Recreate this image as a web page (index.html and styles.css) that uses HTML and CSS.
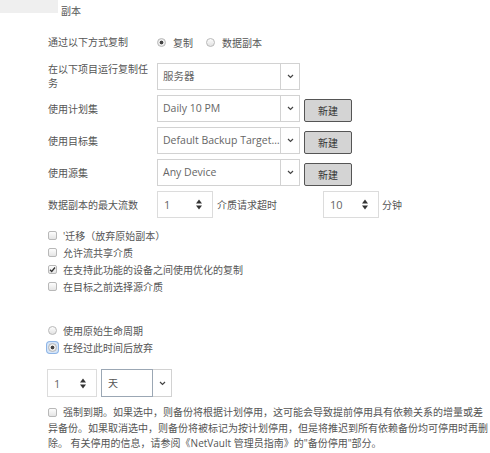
FILE: index.html
```html
<!DOCTYPE html>
<html lang="zh-CN">
<head>
    <meta charset="UTF-8">
    <meta name="viewport" content="width=device-width, initial-scale=1.0">
    <title>副本</title>
    <link rel="stylesheet" href="styles.css">
</head>
<body>
    <div class="page-head">
        <span class="crumb"></span>
        <span class="page-title">副本</span>
    </div>

    <form class="copy-form">
        <div class="form-row method-row">
            <span class="field-label">通过以下方式复制</span>
            <label class="choice"><span class="radio checked"></span>复制</label>
            <label class="choice"><span class="radio"></span>数据副本</label>
        </div>

        <div class="form-row field-row">
            <span class="field-label">在以下项目运行复制任务</span>
            <div class="select">
                <span class="select-value">服务器</span>
                <span class="select-arrow"><svg width="7" height="5" viewBox="0 0 7 5"><path d="M1 1l2.5 2.5L6 1" fill="none" stroke="#444" stroke-width="1.2"/></svg></span>
            </div>
        </div>

        <div class="form-row field-row">
            <span class="field-label">使用计划集</span>
            <div class="select">
                <span class="select-value">Daily 10 PM</span>
                <span class="select-arrow"><svg width="7" height="5" viewBox="0 0 7 5"><path d="M1 1l2.5 2.5L6 1" fill="none" stroke="#444" stroke-width="1.2"/></svg></span>
            </div>
            <button type="button" class="new-button">新建</button>
        </div>

        <div class="form-row field-row">
            <span class="field-label">使用目标集</span>
            <div class="select">
                <span class="select-value">Default Backup Target ...</span>
                <span class="select-arrow"><svg width="7" height="5" viewBox="0 0 7 5"><path d="M1 1l2.5 2.5L6 1" fill="none" stroke="#444" stroke-width="1.2"/></svg></span>
            </div>
            <button type="button" class="new-button">新建</button>
        </div>

        <div class="form-row field-row">
            <span class="field-label">使用源集</span>
            <div class="select">
                <span class="select-value">Any Device</span>
                <span class="select-arrow"><svg width="7" height="5" viewBox="0 0 7 5"><path d="M1 1l2.5 2.5L6 1" fill="none" stroke="#444" stroke-width="1.2"/></svg></span>
            </div>
            <button type="button" class="new-button">新建</button>
        </div>

        <div class="form-row field-row">
            <span class="field-label">数据副本的最大流数</span>
            <div class="spinner">
                <span>1</span>
                <svg width="6" height="11" viewBox="0 0 6 11"><path d="M0 4.5L3 0.5L6 4.5Z M0 6.5L3 10.5L6 6.5Z" fill="#333"/></svg>
            </div>
            <span class="inline-label">介质请求超时</span>
            <div class="spinner">
                <span>10</span>
                <svg width="6" height="11" viewBox="0 0 6 11"><path d="M0 4.5L3 0.5L6 4.5Z M0 6.5L3 10.5L6 6.5Z" fill="#333"/></svg>
            </div>
            <span class="unit">分钟</span>
        </div>

        <div class="check-list">
            <label class="check-item"><span class="box"></span>'迁移（放弃原始副本）</label>
            <label class="check-item"><span class="box"></span>允许流共享介质</label>
            <label class="check-item"><span class="box checked"><svg width="7" height="7" viewBox="0 0 7 7"><path d="M1 3.8l1.7 1.7L6 1.5" fill="none" stroke="#333" stroke-width="1.3"/></svg></span>在支持此功能的设备之间使用优化的复制</label>
            <label class="check-item"><span class="box"></span>在目标之前选择源介质</label>
        </div>

        <div class="radio-list">
            <label class="check-item"><span class="radio"></span>使用原始生命周期</label>
            <label class="check-item"><span class="focus-ring"><span class="radio checked"></span></span>在经过此时间后放弃</label>
        </div>

        <div class="form-row retention-row">
            <div class="spinner small">
                <span>1</span>
                <svg width="6" height="11" viewBox="0 0 6 11"><path d="M0 4.5L3 0.5L6 4.5Z M0 6.5L3 10.5L6 6.5Z" fill="#333"/></svg>
            </div>
            <div class="select day">
                <span class="select-value">天</span>
                <span class="select-arrow"><svg width="7" height="5" viewBox="0 0 7 5"><path d="M1 1l2.5 2.5L6 1" fill="none" stroke="#444" stroke-width="1.2"/></svg></span>
            </div>
        </div>

        <p class="force-expire"><span class="box"></span>强制到期。如果选中，则备份将根据计划停用，这可能会导致提前停用具有依赖关系的增量或差异备份。如果取消选中，则备份将被标记为按计划停用，但是将推迟到所有依赖备份均可停用时再删除。 有关停用的信息，请参阅《NetVault 管理员指南》的"备份停用"部分。</p>
    </form>
</body>
</html>
```

FILE: styles.css
```css
body {
    margin: 0;
    font-family: "Open Sans", "Noto Sans CJK SC", sans-serif;
    font-size: 10px;
    color: #555;
    background-color: #fff;
}

/* 상단 제목 */
.page-head {
    display: flex;
    align-items: center;
    height: 20px;
}

.crumb {
    align-self: flex-start;
    width: 58px;
    height: 13px;
    background-color: #efefef;
}

.page-title {
    margin-left: 3px;
}

.copy-form {
    margin-top: 14px;
    padding-left: 48px;
}

.form-row {
    display: flex;
    align-items: center;
}

.field-label {
    flex: none;
    width: 105px;
    margin-right: 4px;
    line-height: 14px;
}

.method-row {
    height: 16px;
    margin-bottom: 12px;
}

.field-row {
    margin-bottom: 5px;
}

.choice {
    display: flex;
    align-items: center;
    margin-right: 13px;
}

.choice .radio {
    margin-right: 7px;
}

/* 드롭다운 */
.select {
    display: flex;
    width: 143px;
    height: 27px;
}

.select-value {
    flex: 1;
    min-width: 0;
    padding-left: 5px;
    border: 1px solid #d2d2d2;
    line-height: 25px;
    font-size: 10.5px;
    color: #666;
    white-space: nowrap;
    overflow: hidden;
    text-overflow: ellipsis;
}

.select-arrow {
    flex: none;
    width: 18px;
    display: flex;
    align-items: center;
    justify-content: center;
    border: 1px solid #d2d2d2;
    border-left: none;
}

.new-button {
    width: 48px;
    height: 23px;
    margin-left: 4px;
    margin-top: 3px;
    padding: 0;
    font-family: inherit;
    font-size: 10px;
    color: #333;
    background-color: #d4d4d4;
    border: 1px solid #555;
    border-radius: 2px;
}

/* 숫자 입력 */
.spinner {
    box-sizing: border-box;
    display: flex;
    align-items: center;
    justify-content: space-between;
    width: 56px;
    height: 27px;
    padding: 0 10px 0 6px;
    border: 1px solid #dcdcdc;
    font-size: 11px;
    color: #666;
}

.inline-label {
    width: 106px;
    margin-left: 4px;
}

.unit {
    margin-left: 3px;
}

/* 체크박스 / 라디오 */
.check-list {
    margin-top: 9px;
}

.radio-list {
    margin-top: 27px;
}

.check-item {
    display: flex;
    align-items: center;
    height: 17px;
}

.box {
    display: inline-flex;
    align-items: center;
    justify-content: center;
    box-sizing: border-box;
    width: 9px;
    height: 9px;
    margin-right: 6px;
    border: 1px solid #b8b8b8;
    border-radius: 2px;
    background: linear-gradient(#fdfdfd, #e4e4e4);
}

.radio {
    display: inline-block;
    box-sizing: border-box;
    width: 9px;
    height: 9px;
    margin-right: 6px;
    border: 1px solid #b8b8b8;
    border-radius: 50%;
    background: linear-gradient(#fdfdfd, #e2e2e2);
}

.radio.checked {
    background: radial-gradient(circle, #444 0, #444 1.6px, #eee 2.2px, #e2e2e2 100%);
}

.focus-ring {
    display: inline-flex;
    margin-left: -1px;
    margin-right: 5px;
    padding: 1px;
    border-radius: 3px;
    box-shadow: 0 0 0 1px #8db4e6;
    background-color: #d5e5f8;
}

.focus-ring .radio {
    margin-right: 0;
}

.retention-row {
    margin-top: 13px;
    margin-left: -1px;
}

.spinner.small {
    width: 50px;
    height: 28px;
}

.select.day {
    width: 71px;
    height: 28px;
    margin-left: 4px;
}

.select.day .select-value {
    padding-left: 6px;
    border-color: #9ba7b4;
    line-height: 26px;
    font-size: 10px;
    color: #555;
}

.force-expire {
    width: 442px;
    margin: 8px 0 0;
    line-height: 15.5px;
}

.force-expire .box {
    vertical-align: -1px;
}
```
